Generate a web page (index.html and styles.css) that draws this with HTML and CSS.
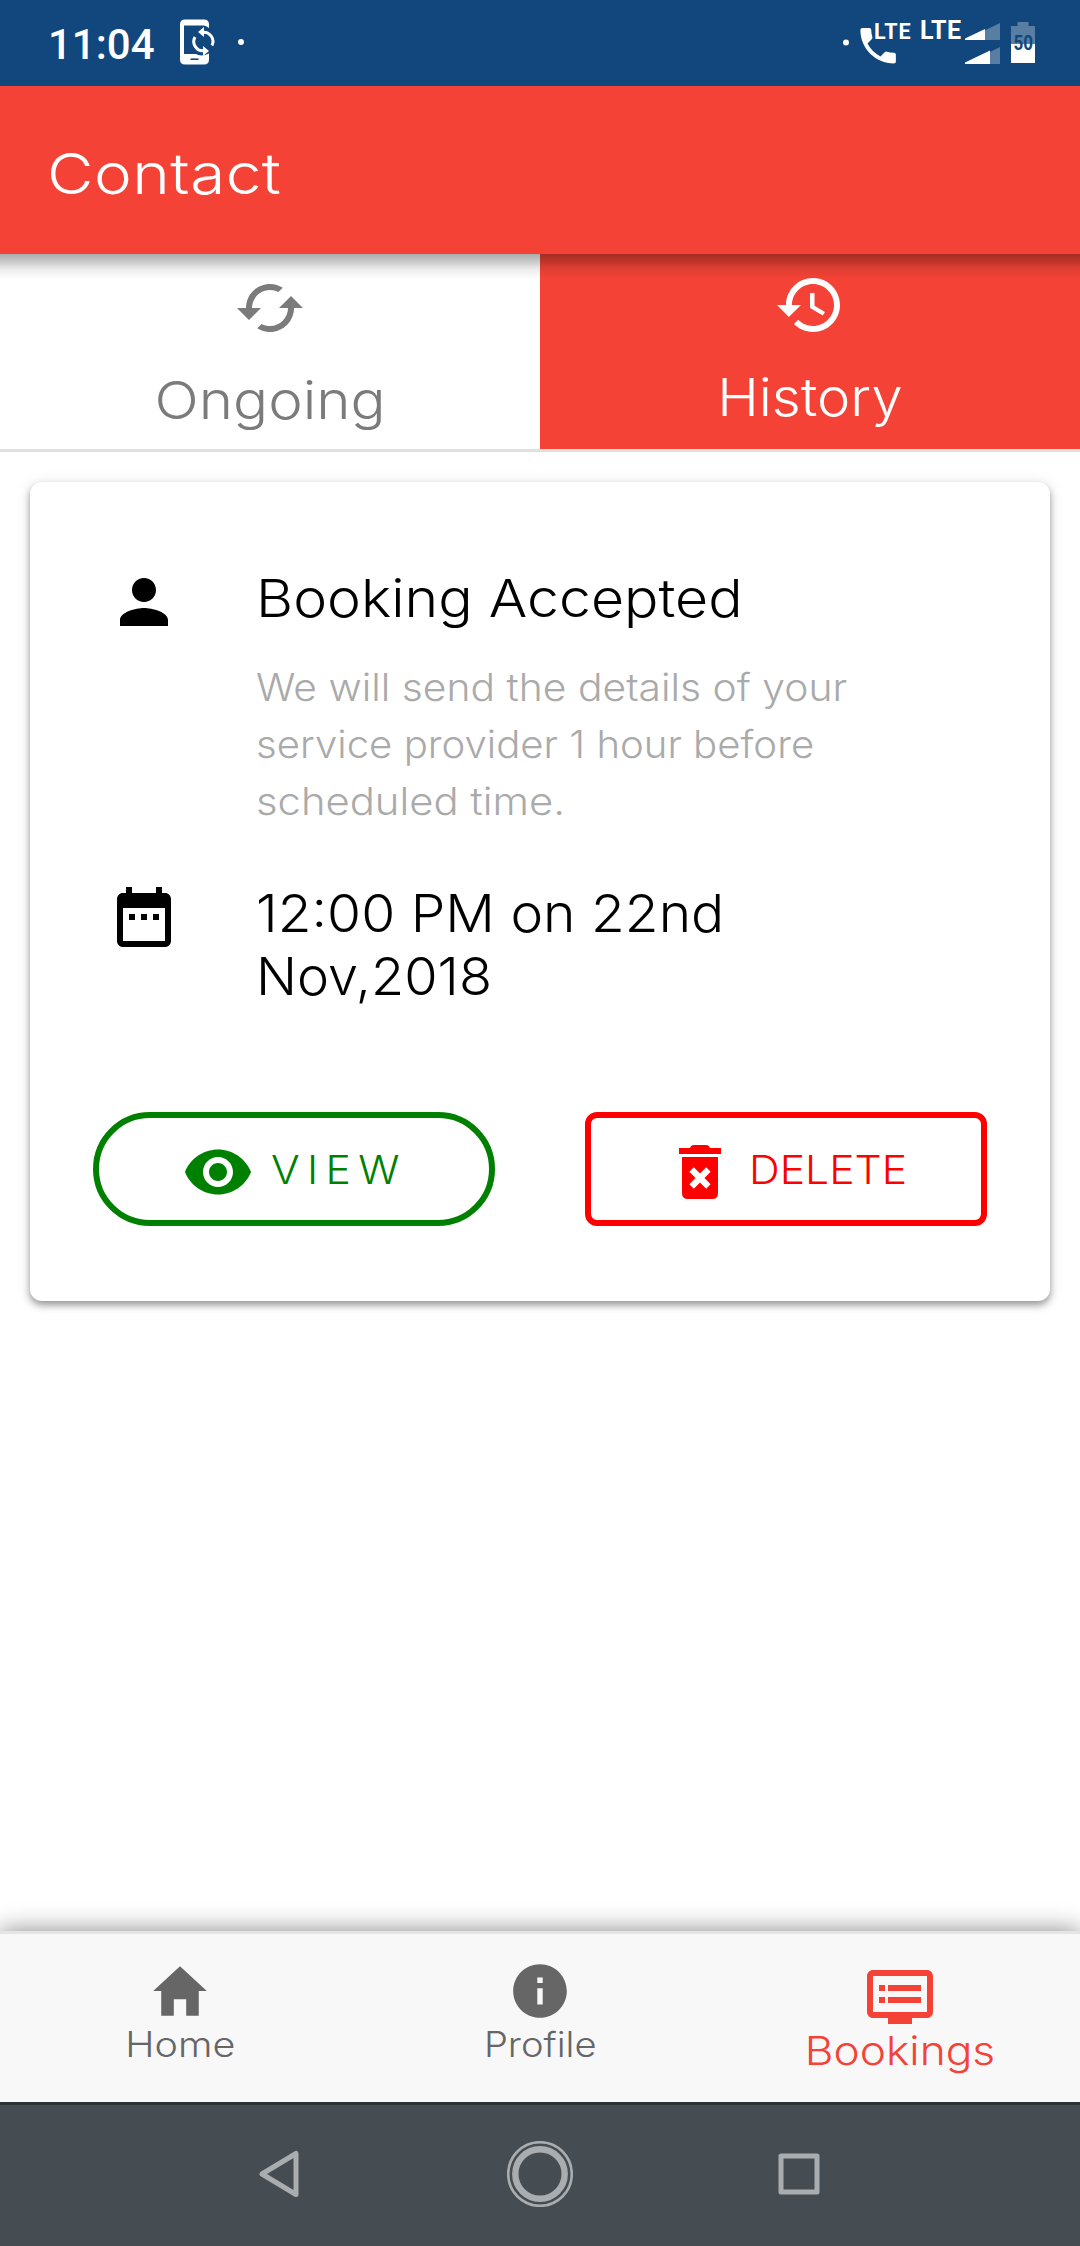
FILE: index.html
```html
<!DOCTYPE html>
<html lang="en">
<head>
<meta charset="utf-8">
<title>Contact</title>
<link rel="stylesheet" href="styles.css">
</head>
<body>
<div class="screen">
  <div class="status">
    <span class="clock">11:04</span>
    <svg class="status-left" width="64" height="46" viewBox="0 0 64 46">
      <path fill="#fff" d="M5 .5h19q5 0 5 5V9q-2-2-5-2.500H4v28.500h12c3 2 8 2 13-.500v6q0 5-5 5H5q-5 0-5-5V5.500q0-5 5-5z"/>
      <path stroke="#11477d" stroke-width="1.600" d="M10.500 40.200h8"/>
      <g fill="none" stroke="#fff" stroke-width="3"><path d="M23 13.200A9.300 9.300 0 0 1 32 26.500"/><path d="M24 31.800A9.300 9.300 0 0 1 15 18"/></g>
      <path fill="#fff" d="M18 13l6-5v10zM29 32l-6-5v10z"/>
      <circle cx="61" cy="23" r="3" fill="#fff"/>
    </svg>
    <svg class="status-right" width="194" height="50" viewBox="843 18 194 50">
      <circle cx="846" cy="42.500" r="3" fill="#fff"/>
      <path fill="#fff" transform="translate(854.500 22.200) scale(1.970)" d="M6.620 10.790c1.440 2.830 3.760 5.140 6.590 6.590l2.200-2.200c.27-.27.67-.36 1.020-.24 1.120.37 2.330.57 3.570.57.55 0 1 .45 1 1V20c0 .55-.45 1-1 1-9.390 0-17-7.610-17-17 0-.55.45-1 1-1h3.500c.55 0 1 .45 1 1 0 1.250.2 2.450.57 3.570.11.35.03.74-.25 1.020l-2.200 2.200z"/>
      <text class="lte" x="874" y="39" font-size="21.500" textLength="36.500">LTE</text>
      <text class="lte" x="920" y="38.500" font-size="25" textLength="41">LTE</text>
      <g fill="#fff" fill-opacity=".3"><path d="M985 30.200L1000 23v17h-15zM990 52l10-5v17h-10z"/><path d="M1017.500 22h11v4h6.500v18h-24V26h6.500z"/></g>
      <path fill="#fff" d="M965 40v-1.500l20-9.500v11zM965 64v-1.500l25-12v13.500zM1011 44h24v19h-24z"/>
      <text class="level" x="1013.500" y="50" font-size="20" textLength="19.500" lengthAdjust="spacingAndGlyphs">50</text>
    </svg>
  </div>

  <header class="appbar"><h1 class="title">Contact</h1></header>

  <nav class="tabs">
    <div class="tab ongoing">
      <svg class="icon" viewBox="0 0 24 24"><path d="M19 8l-4 4h3c0 3.310-2.690 6-6 6-1.010 0-1.970-.25-2.800-.7l-1.460 1.460C8.970 19.540 10.430 20 12 20c4.420 0 8-3.580 8-8h3l-4-4zM6 12c0-3.310 2.690-6 6-6 1.010 0 1.970.25 2.800.7l1.460-1.460C15.030 4.460 13.570 4 12 4c-4.420 0-8 3.580-8 8H1l4 4 4-4H6z"/></svg>
      <span class="tab-label">Ongoing</span>
    </div>
    <div class="tab history">
      <svg class="icon" viewBox="0 0 24 24"><path d="M13 3c-4.970 0-9 4.030-9 9H1l3.890 3.890.07.14L9 12H6c0-3.870 3.130-7 7-7s7 3.130 7 7-3.130 7-7 7c-1.930 0-3.680-.79-4.940-2.060l-1.420 1.420C8.270 19.990 10.510 21 13 21c4.970 0 9-4.030 9-9s-4.030-9-9-9zm-1 5v5l4.280 2.540.72-1.210-3.500-2.080V8H12z"/></svg>
      <span class="tab-label">History</span>
    </div>
  </nav>

  <main class="content">
    <section class="card">
      <div class="row">
        <svg class="icon" viewBox="0 0 24 24"><path d="M12 12c2.210 0 4-1.790 4-4s-1.790-4-4-4-4 1.790-4 4 1.790 4 4 4zm0 2c-2.670 0-8 1.340-8 4v2h16v-2c0-2.660-5.330-4-8-4z"/></svg>
        <div class="text">
          <h2 class="headline accepted">Booking Accepted</h2>
          <p class="note"><span class="line n1">We will send the details of your</span><span class="line n2">service provider 1 hour before</span><span class="line n3">scheduled time.</span></p>
        </div>
      </div>
      <div class="row">
        <svg class="icon" viewBox="0 0 24 24"><path d="M9 11H7v2h2v-2zm4 0h-2v2h2v-2zm4 0h-2v2h2v-2zm2-7h-1V2h-2v2H8V2H6v2H5c-1.110 0-1.990.9-1.990 2L3 20c0 1.100.89 2 2 2h14c1.100 0 2-.9 2-2V6c0-1.100-.9-2-2-2zm0 16H5V9h14v11z"/></svg>
        <div class="text">
          <div class="headline time">12:00 PM on 22nd</div>
          <div class="headline date">Nov,2018</div>
        </div>
      </div>
      <div class="actions">
        <button class="btn view">
          <svg class="icon" viewBox="0 0 24 24"><path d="M12 4.500C7 4.500 2.730 7.610 1 12c1.730 4.390 6 7.500 11 7.500s9.270-3.110 11-7.500c-1.730-4.390-6-7.500-11-7.500zM12 17c-2.760 0-5-2.240-5-5s2.240-5 5-5 5 2.240 5 5-2.240 5-5 5zm0-8c-1.660 0-3 1.340-3 3s1.340 3 3 3 3-1.340 3-3-1.340-3-3-3z"/></svg>
          <span class="btn-label">VIEW</span>
        </button>
        <button class="btn delete">
          <svg class="icon" viewBox="0 0 24 24"><path d="M5 6V4h3.700q.2-1 1.300-1h4q1.100 0 1.300 1H19v2zM6 7h12v12q0 2-2 2H8q-2 0-2-2z"/><path stroke="#fff" stroke-width="2.100" d="M9.200 11.200l5.600 5.600M14.800 11.200l-5.600 5.600"/></svg>
          <span class="btn-label">DELETE</span>
        </button>
      </div>
    </section>
  </main>

  <footer class="bottombar">
    <div class="item home">
      <svg class="small-icon" viewBox="0 0 512 512"><path d="M208 448V320h96v128h97.600V256H464L256 64 48 256h62.400v192z"/></svg>
      <span class="item-label">Home</span>
    </div>
    <div class="item profile">
      <svg class="small-icon" viewBox="0 0 512 512"><path d="M256 48C141.200 48 48 141.200 48 256s93.200 208 208 208 208-93.200 208-208S370.800 48 256 48zm21 312h-42V235h42v125zm0-166h-42v-42h42v42z"/></svg>
      <span class="item-label">Profile</span>
    </div>
    <div class="item bookings">
      <svg class="icon" viewBox="0 0 24 24"><path d="M21 3H3c-1.100 0-2 .9-2 2v12c0 1.100.9 2 2 2h5v2h8v-2h5c1.100 0 2-.9 2-2V5c0-1.100-.9-2-2-2zm0 14H3V5h18v12zm-2-9H8v2h11V8zm0 4H8v2h11v-2zM7 8H5v2h2V8zm0 4H5v2h2v-2z"/></svg>
      <span class="item-label">Bookings</span>
    </div>
  </footer>

  <div class="sysnav">
    <svg width="66" height="66" viewBox="0 0 66 66"><path d="M14 33L48 12.500v41z"/></svg>
    <svg width="66" height="66" viewBox="0 0 66 66"><circle cx="33" cy="33" r="31.800" stroke-width="2.600"/><circle cx="33" cy="33" r="24.700" stroke-width="6.400"/></svg>
    <svg width="66" height="66" viewBox="0 0 66 66"><path d="M15 15h36v36H15z"/></svg>
  </div>
</div>
</body>
</html>
```
FILE: styles.css
```css
* { box-sizing: border-box; }
body { margin: 0; background: #fff; font-family: Inter, "Liberation Sans", sans-serif; font-weight: 330; }
h1, h2, p { margin: 0; font-weight: inherit; }
.screen { display: flex; flex-direction: column; width: 1080px; height: 2246px; overflow: hidden; }
.icon { width: 72px; height: 72px; flex: none; fill: currentColor; }
.small-icon { width: 66px; height: 66px; flex: none; fill: currentColor; }

.status { flex: none; height: 86px; display: flex; align-items: center; padding: 0 43px 0 48px; background: #11477d; color: #fff; }
.clock { font: 500 42px/50px Roboto, sans-serif; width: 132px; padding-top: 3px; }
.status-left { margin-bottom: 2px; }
.status-right { margin-left: auto; overflow: visible; }
.lte { font-family: Roboto, sans-serif; font-weight: 700; fill: #fff; }
.level { font-family: Roboto, sans-serif; font-weight: 700; fill: #11477d; }

.title, .headline, .line, .tab-label, .btn-label, .item-label { --wide: 1.08; white-space: nowrap; transform: scaleX(var(--wide)); }
.title, .headline, .line, .btn-label { transform-origin: left; }

.appbar { flex: none; height: 168px; display: flex; align-items: center; padding: 7px 0 0 47px; background: #f44336; color: #fff; }
.title { --wide: 1.14; font-size: 56px; line-height: 66px; letter-spacing: .4px; }

.tabs { position: relative; flex: none; height: 198px; display: grid; grid-template-columns: 1fr 1fr; border-bottom: 3px solid #e0e0e0; }
.tabs::before { content: ""; position: absolute; top: 0; left: 0; right: 0; height: 24px; background: linear-gradient(rgba(0,0,0,.33), rgba(0,0,0,.22) 30%, rgba(0,0,0,.07) 65%, rgba(0,0,0,.01)); }
.tab { display: flex; flex-direction: column; align-items: center; gap: 27px; }
.tab-label { font-size: 52px; line-height: 60px; }
.ongoing { padding-top: 18px; color: #7b7b7b; }
.ongoing .tab-label { --wide: 1.12; }
.history { padding-top: 15px; background: #f44336; color: #fff; }

.content { flex: 1; padding: 30px; }
.card { height: 819px; padding: 84px 63px 75px; border-radius: 12px; background: #fff; box-shadow: 0 4px 7px rgba(0,0,0,.36), 0 2px 16px rgba(0,0,0,.11); display: flex; flex-direction: column; }
.row { display: flex; gap: 76px; height: 263px; padding-left: 15px; margin-bottom: 52px; }
.row + .row { height: auto; }
.text { padding-top: 1px; }
.headline { font-size: 52px; line-height: 63px; color: #000; }
.accepted { --wide: 1.1; }
.note { display: flex; flex-direction: column; margin-top: 29px; font-size: 38.5px; line-height: 57px; color: #aaa; }
.n1 { --wide: 1.06; }
.n2 { --wide: 1.042; }
.n3 { --wide: 1.085; }
.time { --wide: 1.06; }
.date { --wide: 1.04; }
.actions { display: flex; justify-content: space-between; margin-top: auto; }
.btn { display: flex; align-items: center; width: 402px; height: 114px; padding: 0; border: 6px solid currentColor; background: none; font: 330 39.5px/48px Inter, sans-serif; }
.btn .icon { margin-top: 6px; }
.btn-label { padding-top: 2px; }
.view { gap: 17px; padding-left: 83px; border-radius: 57px; color: #008000; }
.view .btn-label { letter-spacing: 6.8px; }
.delete { gap: 13px; padding-left: 73px; border-radius: 12px; color: #f00; }

.bottombar { flex: none; height: 171px; display: grid; grid-template-columns: repeat(3, 1fr); border-top: 3px solid #e5e5e5; background: #f8f8f8; box-shadow: 0 0 24px rgba(0,0,0,.48); clip-path: inset(-30px 0 0 0); }
.item { display: flex; flex-direction: column; align-items: center; padding-top: 24px; color: #666; font-size: 34.7px; line-height: 40px; }
.home .item-label { --wide: 1.14; }
.profile .item-label { --wide: 1.1; }
.bookings { padding-top: 27px; color: #f44336; font-size: 39.5px; line-height: 36px; }
.bookings .item-label { --wide: 1.12; }

.sysnav { flex: none; height: 144px; display: flex; align-items: center; justify-content: center; gap: 193px; padding-bottom: 3px; border-top: 3px solid #2b3235; background: #454d52; }
.sysnav svg { fill: none; stroke: #a9adaf; stroke-width: 5; stroke-linejoin: round; }
```
